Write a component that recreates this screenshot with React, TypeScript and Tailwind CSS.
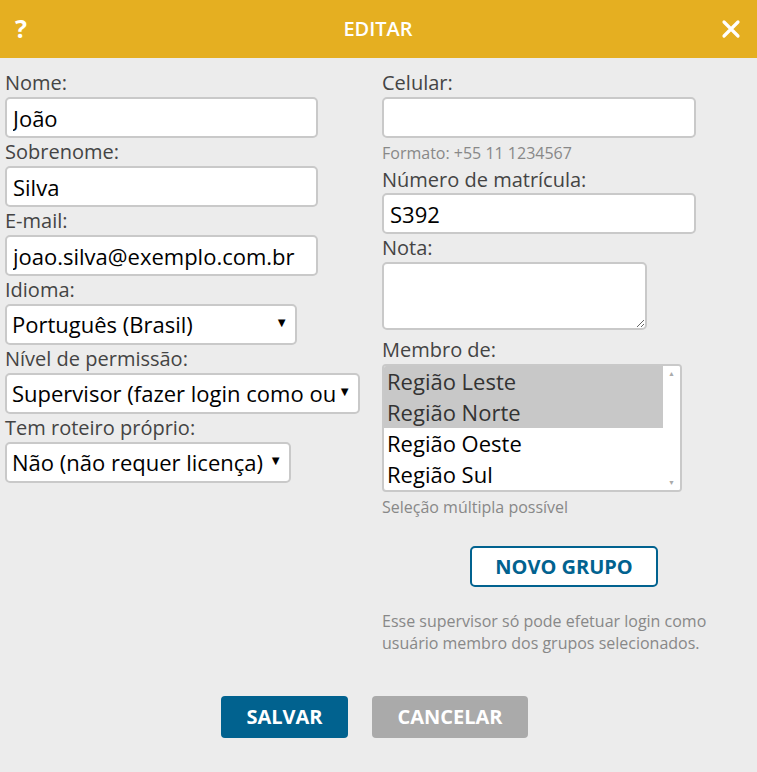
import React from "react";

const labelCls = "block h-[22px] text-[20px] leading-[22px] text-[#444]";
const boxCls =
  "block h-[41px] rounded-[5px] border-2 border-[#c9c9c9] bg-white px-[6px] text-[22px] text-black outline-none";

function Field(props: { label: string; value?: string; width: string }) {
  return (
    <div className="mb-[3px]">
      <label className={labelCls}>{props.label}</label>
      <input
        className={`${boxCls} mt-[3px] ${props.width}`}
        defaultValue={props.value ?? ""}
      />
    </div>
  );
}

function SelectField(props: { label: string; value: string; width: string }) {
  return (
    <div className="mb-[3px]">
      <label className={labelCls}>{props.label}</label>
      <div className={`${boxCls} mt-[3px] ${props.width} relative flex items-center pl-[5px] pr-[22px]`}>
        <span className="overflow-hidden whitespace-nowrap">{props.value}</span>
        <span className="absolute right-[7px] top-[10px] text-[13px] leading-none text-black">▼</span>
      </div>
    </div>
  );
}

const groups = [
  { name: "Região Leste", selected: true },
  { name: "Região Norte", selected: true },
  { name: "Região Oeste", selected: false },
  { name: "Região Sul", selected: false },
];

export default function App() {
  return (
    <div className="h-[772px] w-[757px] bg-[#ececec] font-['Open_Sans',sans-serif]">
      <div className="flex h-[58px] items-center justify-between bg-[#e5af21] px-[15px] text-white">
        <span className="w-[20px] text-[25px] font-bold">?</span>
        <span className="text-[20px] font-semibold">EDITAR</span>
        <svg width="20" height="20" viewBox="0 0 20 20" className="mr-[1px]">
          <path d="M3 3 L17 17 M17 3 L3 17" stroke="white" strokeWidth="3.2" strokeLinecap="round" />
        </svg>
      </div>

      <div className="grid grid-cols-[377px_314px] pl-[5px] pt-[14px]">
        <div>
          <Field label="Nome:" value="João" width="w-[313px]" />
          <Field label="Sobrenome:" value="Silva" width="w-[313px]" />
          <Field label="E-mail:" value="joao.silva@exemplo.com.br" width="w-[313px]" />
          <SelectField label="Idioma:" value="Português (Brasil)" width="w-[292px]" />
          <SelectField label="Nível de permissão:" value="Supervisor (fazer login como outro usuário)" width="w-[355px]" />
          <SelectField label="Tem roteiro próprio:" value="Não (não requer licença)" width="w-[286px]" />
        </div>

        <div>
          <label className={labelCls}>Celular:</label>
          <input className={`${boxCls} mt-[3px] w-[314px]`} defaultValue="" />
          <p className="mt-[5px] h-[20px] text-[16px] leading-[20px] text-[#888]">Formato: +55 11 1234567</p>
          <label className={`${labelCls} mt-[6px]`}>Número de matrícula:</label>
          <input className={`${boxCls} mt-[2px] w-[314px]`} defaultValue="S392" />
          <label className={`${labelCls} mt-[3px]`}>Nota:</label>
          <textarea className="mt-[3px] block h-[68px] w-[265px] rounded-[5px] border-2 border-[#c9c9c9] bg-white outline-none" />
          <label className={`${labelCls} mt-[9px]`}>Membro de:</label>
          <div className="mt-[3px] flex h-[128px] w-[300px] overflow-hidden rounded-[4px] border-2 border-[#c9c9c9] bg-white">
            <div className="flex-1">
              {groups.map((g) => (
                <div
                  key={g.name}
                  className={`h-[31px] pl-[3px] text-[22px] leading-[31px] ${g.selected ? "bg-[#c8c8c8] text-[#333]" : "text-black"}`}
                >
                  {g.name}
                </div>
              ))}
            </div>
            <div className="flex w-[17px] flex-col items-center justify-between bg-white py-[4px] text-[7px] leading-none text-[#aaa]">
              <span>▲</span>
              <span>▼</span>
            </div>
          </div>
          <p className="mt-[4px] h-[22px] text-[16px] leading-[22px] text-[#888]">Seleção múltipla possível</p>
          <div className="mt-[28px] pl-[88px]">
            <button className="h-[41px] w-[188px] rounded-[5px] border-2 border-[#01628f] bg-white text-[20px] font-bold text-[#01628f]">
              NOVO GRUPO
            </button>
          </div>
          <p className="mt-[23px] w-[340px] text-[16px] leading-[22px] text-[#888]">
            Esse supervisor só pode efetuar login como
            <br />
            usuário membro dos grupos selecionados.
          </p>
        </div>
      </div>

      <div className="mt-[42px] flex justify-center gap-[24px] pr-[8px]">
        <button className="h-[42px] w-[127px] rounded-[4px] bg-[#01628f] text-[20px] font-bold text-white">SALVAR</button>
        <button className="h-[42px] w-[156px] rounded-[4px] bg-[#aaaaaa] text-[20px] font-bold text-white">CANCELAR</button>
      </div>
    </div>
  );
}
